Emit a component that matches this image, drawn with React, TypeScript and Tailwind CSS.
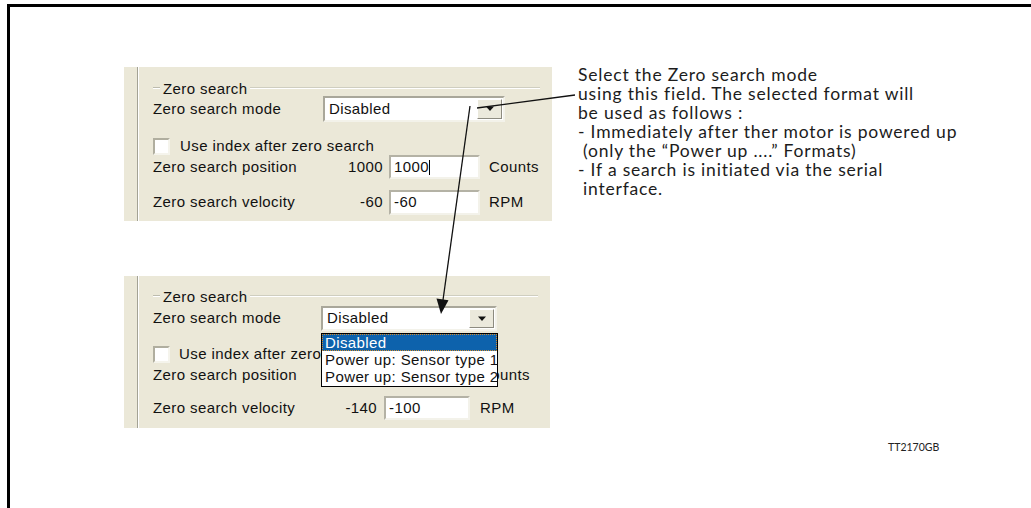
import type { ReactNode } from 'react';

const ui = "font-['Liberation_Sans',Arial,sans-serif] text-[15px] tracking-[0.4px] text-[#111]";

function GroupTitle({ mr }: { mr: number }) {
  return (
    <div className="flex items-center h-[16px]" style={{ marginRight: mr }}>
      <div className="w-[7px] border-t border-[#bdbcae] border-b-white border-b" />
      <span className="px-[3px] leading-none">Zero search</span>
      <div className="flex-1 border-t border-[#cfcec0] border-b border-b-white" />
    </div>
  );
}

function Combo({ w, h }: { w: number; h: number }) {
  return (
    <div
      className="flex bg-white border-2 border-t-[#a9a79a] border-l-[#a9a79a] border-b-[#f3f2ea] border-r-[#f3f2ea]"
      style={{ width: w, height: h }}
    >
      <span className="flex-1 flex items-center pl-[4px]">Disabled</span>
      <div className="w-[25px] m-[1px] flex items-center justify-center bg-[#ebe9dc] border border-t-white border-l-white border-b-[#8d8b80] border-r-[#8d8b80]">
        <svg width="10" height="6" viewBox="0 0 10 6"><path d="M1 0.5h8L5 5z" fill="#111" /></svg>
      </div>
    </div>
  );
}

function Edit({ w, h, children }: { w: number; h: number; children: ReactNode }) {
  return (
    <div
      className="flex items-center pl-[3px] bg-white border-2 border-t-[#b4b2a5] border-l-[#b4b2a5] border-b-[#f3f2ea] border-r-[#f3f2ea]"
      style={{ width: w, height: h }}
    >
      {children}
    </div>
  );
}

function Checkbox() {
  return (
    <div className="w-[17px] h-[17px] bg-white border-2 border-t-[#b0ae9f] border-l-[#b0ae9f] border-b-[#f5f4ec] border-r-[#f5f4ec]" />
  );
}

export default function App() {
  return (
    <div className="relative w-[1031px] h-[508px] bg-white overflow-hidden pl-[7px] pt-[4px]">
      <div className="h-[520px] border-l-[3px] border-t-[3px] border-black flex">
        {/* dialog captures */}
        <div className={`${ui} ml-[114px] pt-[60px] flex flex-col`}>
          {/* before */}
          <div className="w-[428px] h-[154px] bg-[#ebe8d8] pl-[13px] flex">
            <div className="border-l border-[#a3a294] w-[2px] bg-white" />
            <div className="flex-1 pl-[14px] pt-[13px] flex flex-col">
              <GroupTitle mr={12} />
              <div className="flex items-center h-[26px]">
                <span className="w-[170px]">Zero search mode</span>
                <Combo w={182} h={26} />
              </div>
              <div className="flex items-center h-[17px] mt-[16px]">
                <Checkbox />
                <span className="ml-[10px]">Use index after zero search</span>
              </div>
              <div className="flex items-center h-[24px]">
                <span className="w-[190px]">Zero search position</span>
                <span className="w-[40px] text-right">1000</span>
                <div className="ml-[6px]">
                  <Edit w={91} h={24}>1000<span className="w-px h-[15px] bg-black" /></Edit>
                </div>
                <span className="ml-[9px]">Counts</span>
              </div>
              <div className="flex items-center h-[25px] mt-[11px]">
                <span className="w-[190px]">Zero search velocity</span>
                <span className="w-[40px] text-right">-60</span>
                <div className="ml-[6px]">
                  <Edit w={91} h={25}>-60</Edit>
                </div>
                <span className="ml-[9px]">RPM</span>
              </div>
            </div>
          </div>

          {/* after, list opened */}
          <div className="relative mt-[55px] w-[426px] h-[152px] bg-[#ebe8d8] pl-[13px] flex">
            <div className="border-l border-[#a3a294] w-[2px] bg-white" />
            <div className="flex-1 pl-[14px] pt-[12px] flex flex-col">
              <GroupTitle mr={12} />
              <div className="flex items-center h-[25px] mt-[2px]">
                <span className="w-[168px]">Zero search mode</span>
                <Combo w={176} h={25} />
              </div>
              <div className="flex items-center h-[16px] mt-[15px]">
                <Checkbox />
                <span className="ml-[9px]">Use index after zero search</span>
              </div>
              <div className="flex items-center h-[23px] mt-[2px]">
                <span className="w-[184px]">Zero search position</span>
                <span className="w-[40px] text-right">1000</span>
                <div className="ml-[7px]">
                  <Edit w={86} h={23}>1000</Edit>
                </div>
                <span className="ml-[10px]">Counts</span>
              </div>
              <div className="flex items-center h-[24px] mt-[9px]">
                <span className="w-[184px]">Zero search velocity</span>
                <span className="w-[40px] text-right">-140</span>
                <div className="ml-[7px]">
                  <Edit w={86} h={24}>-100</Edit>
                </div>
                <span className="ml-[10px]">RPM</span>
              </div>
            </div>

            {/* open drop-down list */}
            <div className="absolute left-[197px] top-[57px] w-[177px] h-[54px] bg-white border border-black flex flex-col leading-[17px]">
              <div className="h-[17px] bg-[#0d62ac] text-white pl-[3px] outline-1 outline-dotted outline-[#d58a2a] -outline-offset-1">Disabled</div>
              <div className="h-[17px] pl-[3px] whitespace-nowrap">Power up: Sensor type 1</div>
              <div className="h-[17px] pl-[3px] whitespace-nowrap">Power up: Sensor type 2</div>
            </div>
          </div>
        </div>

        {/* note */}
        <div className="ml-[26px] pt-[58px] flex flex-col font-['Lato','Open_Sans',sans-serif] text-[17.5px] tracking-[0.8px] leading-[19px] text-[#1c1c1c] whitespace-nowrap">
          <p>Select the Zero search mode</p>
          <p>using this field. The selected format will</p>
          <p>be used as follows :</p>
          <p>- Immediately after ther motor is powered up</p>
          <p className="pl-[5px]">(only the “Power up ....” Formats)</p>
          <p>- If a search is initiated via the serial</p>
          <p className="pl-[5px]">interface.</p>
          <p className="mt-[243px] ml-[310px] text-[10.5px] tracking-normal leading-[12px] text-[#222]">TT2170GB</p>
        </div>
      </div>

      {/* leader lines */}
      <svg className="absolute inset-0 pointer-events-none" width="1031" height="508">
        <line x1="477" y1="108" x2="575" y2="95" stroke="#111" strokeWidth="1.3" />
        <line x1="470" y1="106" x2="443" y2="300" stroke="#111" strokeWidth="1.3" />
        <path d="M436.5 298.5 L448.5 300.2 L441 314 Z" fill="#111" />
      </svg>
    </div>
  );
}
